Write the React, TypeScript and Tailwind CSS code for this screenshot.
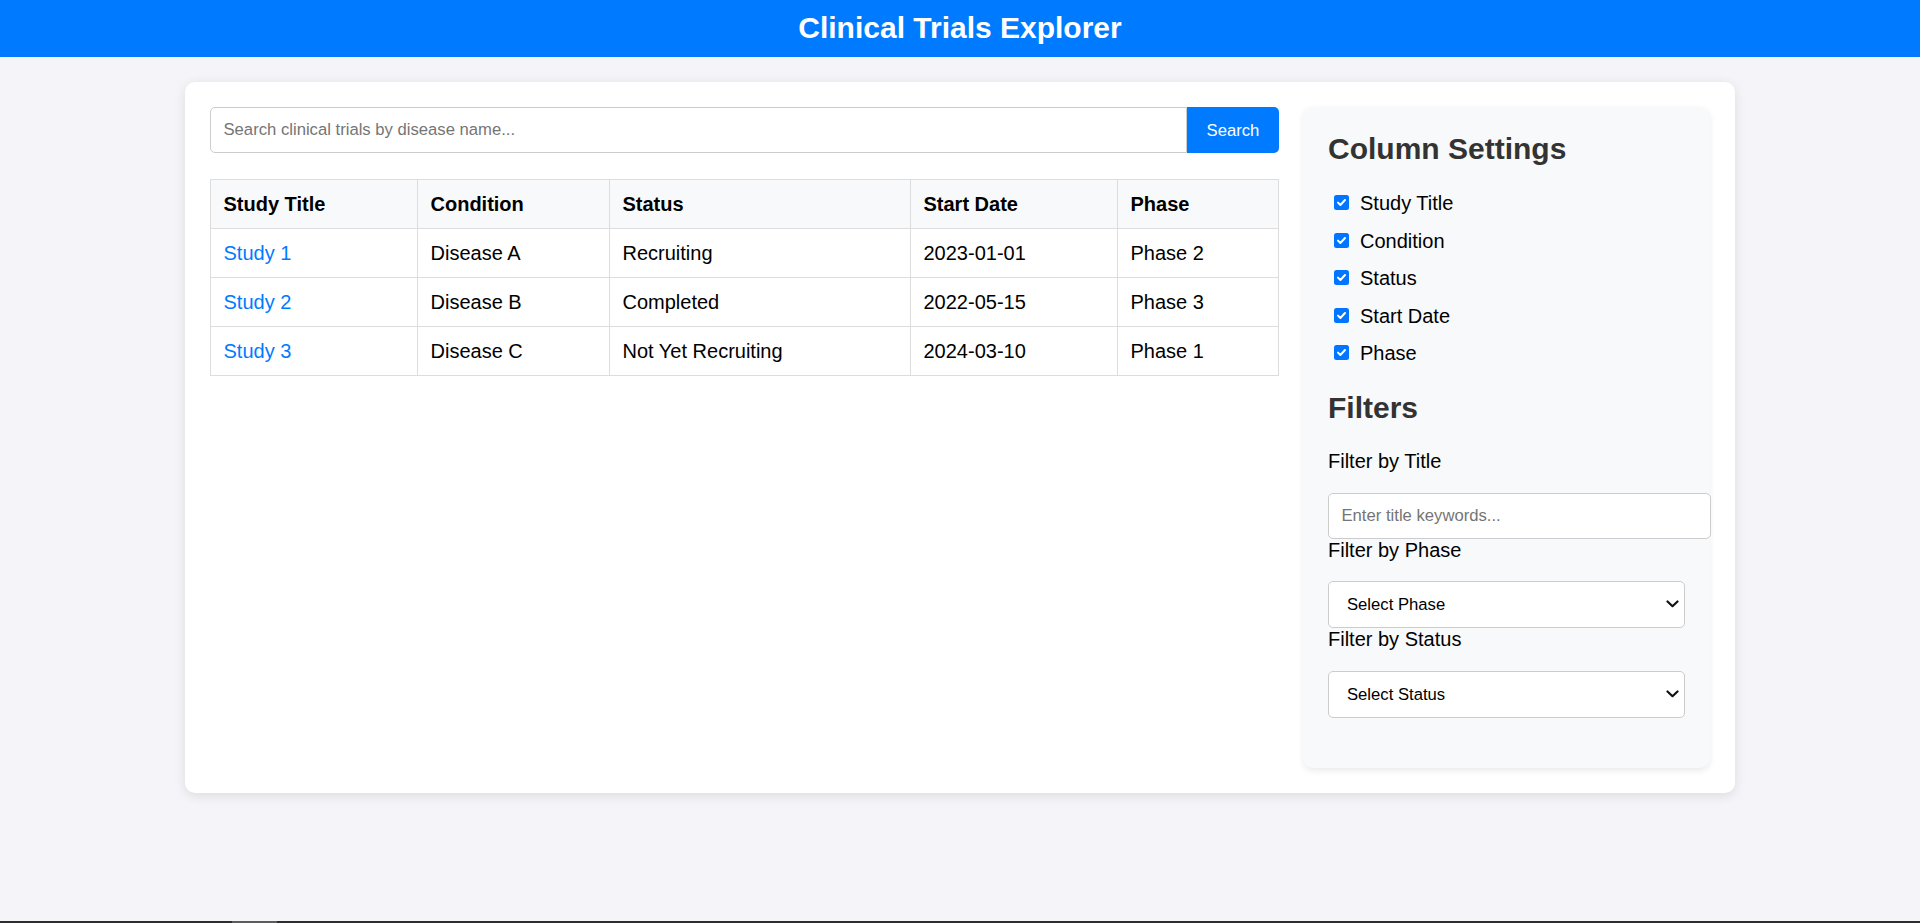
import React, { useState } from 'react';

type Trial = {
  id: number;
  title: string;
  condition: string;
  status: string;
  startDate: string;
  phase: string;
};

const trials: Trial[] = [
  { id: 1, title: 'Study 1', condition: 'Disease A', status: 'Recruiting', startDate: '2023-01-01', phase: 'Phase 2' },
  { id: 2, title: 'Study 2', condition: 'Disease B', status: 'Completed', startDate: '2022-05-15', phase: 'Phase 3' },
  { id: 3, title: 'Study 3', condition: 'Disease C', status: 'Not Yet Recruiting', startDate: '2024-03-10', phase: 'Phase 1' },
];

const columns = ['Study Title', 'Condition', 'Status', 'Start Date', 'Phase'];

function Chevron() {
  return (
    <svg
      className="pointer-events-none absolute right-[6px] top-1/2 -translate-y-1/2"
      width="13"
      height="8"
      viewBox="0 0 13 8"
      fill="none"
    >
      <path d="M1.5 1.5 L6.5 6.2 L11.5 1.5" stroke="#111" strokeWidth="2.2" strokeLinecap="round" strokeLinejoin="round" />
    </svg>
  );
}

function CheckBox({ checked, onToggle }: { checked: boolean; onToggle: () => void }) {
  return (
    <span
      onClick={onToggle}
      className={`ml-[6px] mr-[11px] flex h-[15px] w-[15px] shrink-0 -translate-y-px items-center justify-center rounded-[2.5px] ${
        checked ? 'bg-[#0075ff]' : 'border border-[#767676] bg-white'
      }`}
    >
      {checked && (
        <svg width="11" height="11" viewBox="0 0 11 11" fill="none">
          <path d="M2 5.6 L4.4 8 L9 3" stroke="white" strokeWidth="2" strokeLinecap="round" strokeLinejoin="round" />
        </svg>
      )}
    </span>
  );
}

export default function App() {
  const [visible, setVisible] = useState<Record<string, boolean>>({
    'Study Title': true,
    Condition: true,
    Status: true,
    'Start Date': true,
    Phase: true,
  });

  return (
    <div className="min-h-screen bg-[#f4f4f9] font-['Liberation_Sans',Arial,sans-serif] text-black">
      {/* Header */}
      <header className="h-[57px] bg-[#007bff] pt-[10.5px] text-center">
        <h1 className="text-[30px] font-bold leading-[34.5px] text-white">Clinical Trials Explorer</h1>
      </header>

      {/* Main card */}
      <div className="mx-auto mt-[25px] flex max-w-[1550px] items-start gap-[24px] rounded-[10px] bg-white p-[25px] shadow-[0_2.5px_12px_rgba(0,0,0,0.1)]">
        {/* Results */}
        <div className="min-w-0 flex-1">
          <div className="flex h-[46px]">
            <input
              type="text"
              placeholder="Search clinical trials by disease name..."
              className="h-full min-w-0 flex-1 rounded-l-[5px] border border-[#ccc] bg-white px-[12.5px] text-[16.67px] outline-none placeholder:text-[#757575]"
            />
            <button className="h-full w-[92px] shrink-0 rounded-r-[5px] bg-[#007bff] text-[16.67px] text-white">
              Search
            </button>
          </div>

          <table className="mt-[26px] w-full table-fixed border-collapse text-[20px] leading-[23px]">
            <colgroup>
              <col className="w-[207px]" />
              <col className="w-[192px]" />
              <col className="w-[301px]" />
              <col className="w-[207px]" />
              <col />
            </colgroup>
            <thead>
              <tr className="bg-[#f8f9fa]">
                {columns.map((c) => (
                  <th key={c} className="border border-[#ddd] p-[12.5px] text-left font-bold">
                    {c}
                  </th>
                ))}
              </tr>
            </thead>
            <tbody>
              {trials.map((t) => (
                <tr key={t.id}>
                  <td className="border border-[#ddd] p-[12.5px]">
                    <a href="#" className="text-[#007bff]">
                      {t.title}
                    </a>
                  </td>
                  <td className="border border-[#ddd] p-[12.5px]">{t.condition}</td>
                  <td className="border border-[#ddd] p-[12.5px]">{t.status}</td>
                  <td className="border border-[#ddd] p-[12.5px]">{t.startDate}</td>
                  <td className="border border-[#ddd] p-[12.5px]">{t.phase}</td>
                </tr>
              ))}
            </tbody>
          </table>
        </div>

        {/* Sidebar */}
        <aside className="w-[407px] shrink-0 rounded-[10px] bg-[#f8f9fa] p-[25px] shadow-[0_2.5px_6px_rgba(0,0,0,0.08)]">
          <h2 className="text-[30px] font-bold leading-[34.5px] text-[#333]">Column Settings</h2>
          <div className="mt-[18.5px] flex flex-col">
            {columns.map((c) => (
              <label key={c} className="flex h-[37.5px] items-center text-[20px] leading-[23px]">
                <CheckBox checked={visible[c]} onToggle={() => setVisible({ ...visible, [c]: !visible[c] })} />
                {c}
              </label>
            ))}
          </div>

          <h2 className="mt-[18px] text-[30px] font-bold leading-[34.5px] text-[#333]">Filters</h2>

          <div className="mt-[25px] text-[20px] leading-[23px]">Filter by Title</div>
          <input
            type="text"
            placeholder="Enter title keywords..."
            className="mt-[19.5px] h-[46px] w-[383px] rounded-[5px] border border-[#ccc] bg-white px-[12.5px] text-[16.67px] outline-none placeholder:text-[#757575]"
          />

          <div className="text-[20px] leading-[23px]">Filter by Phase</div>
          <div className="relative mt-[19px] h-[47px]">
            <select className="h-full w-full appearance-none rounded-[5px] border border-[#ccc] bg-white pl-[18px] text-[16.67px] text-black outline-none">
              <option>Select Phase</option>
              <option>Phase 1</option>
              <option>Phase 2</option>
              <option>Phase 3</option>
            </select>
            <Chevron />
          </div>

          <div className="text-[20px] leading-[23px]">Filter by Status</div>
          <div className="relative mb-[25px] mt-[20px] h-[47px]">
            <select className="h-full w-full appearance-none rounded-[5px] border border-[#ccc] bg-white pl-[18px] text-[16.67px] text-black outline-none">
              <option>Select Status</option>
              <option>Recruiting</option>
              <option>Completed</option>
              <option>Not Yet Recruiting</option>
            </select>
            <Chevron />
          </div>
        </aside>
      </div>

      {/* bottom scrollbar strip */}
      <div className="fixed inset-x-0 bottom-0 h-[2px] bg-[#2d2d2d]">
        <div className="ml-[232px] h-full w-[45px] bg-[#5c5c5c]" />
      </div>
    </div>
  );
}
